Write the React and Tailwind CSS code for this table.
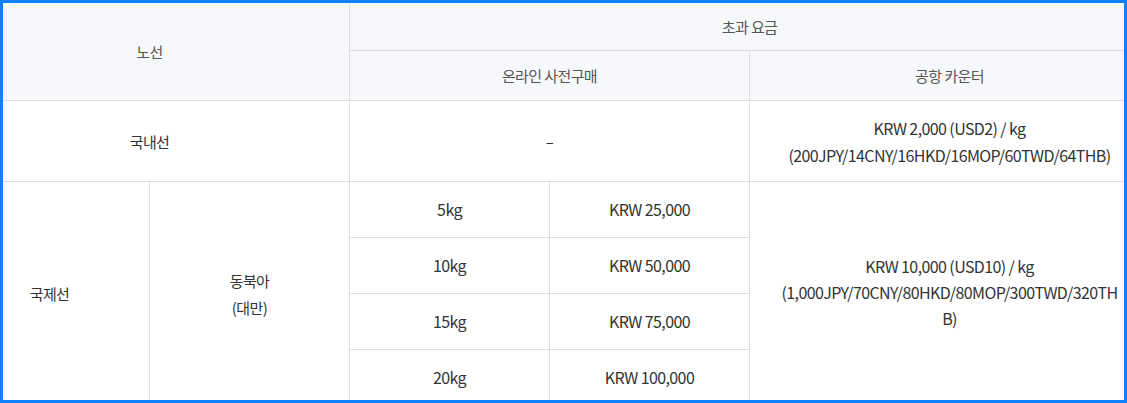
const rows = [
  { weight: "5kg", price: "KRW 25,000" },
  { weight: "10kg", price: "KRW 50,000" },
  { weight: "15kg", price: "KRW 75,000" },
  { weight: "20kg", price: "KRW 100,000" },
];

function Th({ className = "", children }) {
  return (
    <div
      className={`flex items-center justify-center bg-[#f7f8fb] text-center text-[#555] ${className}`}
    >
      {children}
    </div>
  );
}

function Td({ className = "", children }) {
  return (
    <div
      className={`flex flex-col items-center justify-center bg-white text-center text-[#333] ${className}`}
    >
      {children}
    </div>
  );
}

export default function App() {
  return (
    <div className="h-[403px] w-[1127px] overflow-hidden border-[3px] border-[#1180f6] bg-white font-['Noto_Sans_CJK_KR',sans-serif] text-[15px] leading-[27px] tracking-[-0.6px]">
      <div className="-ml-[53px] grid w-[1199px] grid-cols-[199px_199px_199px_199px_399px] grid-rows-[47px_49px_80px_55px_55px_55px_55px] gap-px bg-[#dddddd]">
        <Th className="col-span-2 row-span-2">노선</Th>
        <Th className="col-span-3">초과 요금</Th>
        <Th className="col-span-2">온라인 사전구매</Th>
        <Th>공항 카운터</Th>

        <Td className="col-span-2">국내선</Td>
        <Td className="col-span-2">–</Td>
        <Td className="text-[16px] pt-px">
          <span>KRW 2,000 (USD2) / kg</span>
          <span>(200JPY/14CNY/16HKD/16MOP/60TWD/64THB)</span>
        </Td>

        <Td className="row-span-4">국제선</Td>
        <Td className="row-span-4">
          <span>동북아</span>
          <span>(대만)</span>
        </Td>
        <Td className="text-[16px]">{rows[0].weight}</Td>
        <Td className="text-[16px]">{rows[0].price}</Td>
        <Td className="row-span-4 pb-1 text-[16px] leading-[26px]">
          <span>KRW 10,000 (USD10) / kg</span>
          <span>(1,000JPY/70CNY/80HKD/80MOP/300TWD/320TH</span>
          <span>B)</span>
        </Td>
        {rows.slice(1).map((r) => (
          <>
            <Td key={r.weight} className="text-[16px]">{r.weight}</Td>
            <Td key={r.price} className="text-[16px]">{r.price}</Td>
          </>
        ))}
      </div>
    </div>
  );
}
